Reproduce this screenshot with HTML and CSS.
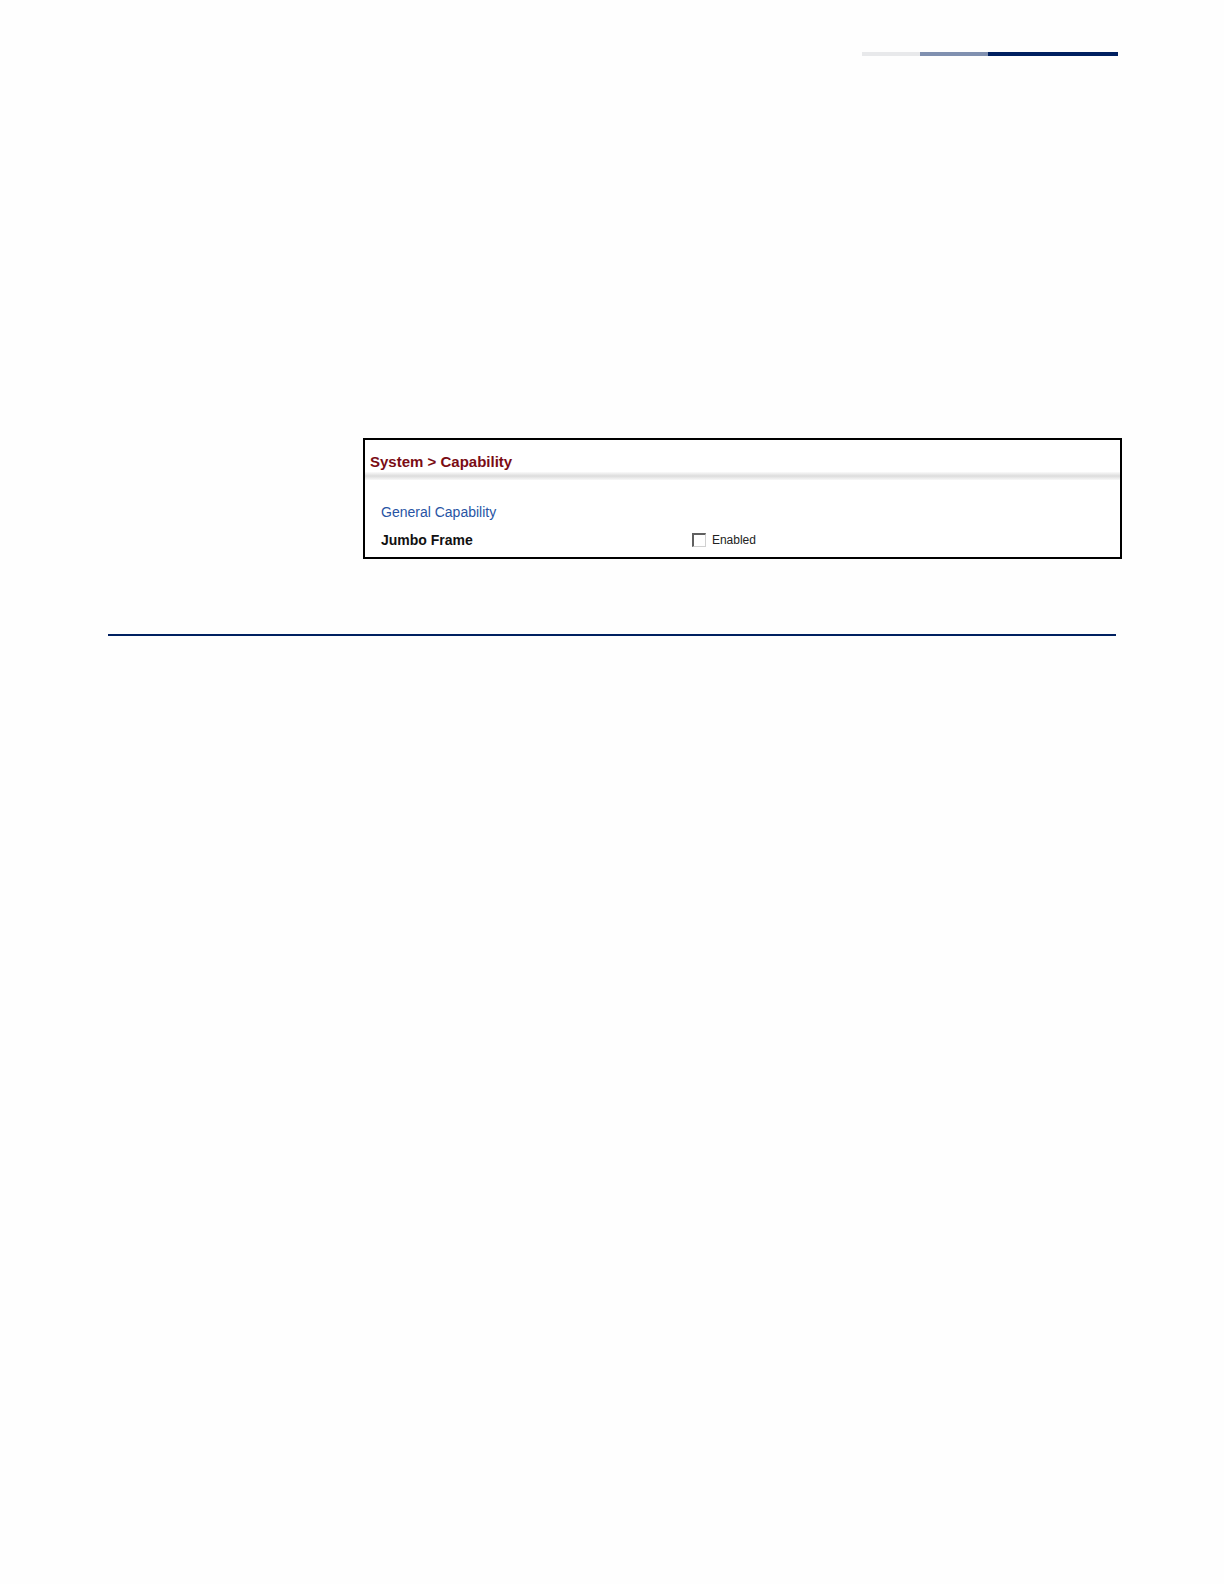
FILE: index.html
```html
<!DOCTYPE html>
<html lang="en">
<head>
    <meta charset="utf-8">
    <title>System &gt; Capability</title>
    <link rel="stylesheet" href="styles.css">
</head>
<body>
    <div class="page">
        <div class="header-bar">
            <span class="bar-light"></span>
            <span class="bar-mid"></span>
            <span class="bar-dark"></span>
        </div>

        <form class="panel">
            <h1>System &gt; Capability</h1>
            <div class="divider"></div>
            <div class="panel-body">
                <h2>General Capability</h2>
                <div class="row">
                    <span class="row-name" id="jumbo-name">Jumbo Frame</span>
                    <div class="row-value">
                        <input type="checkbox" id="jumbo" aria-describedby="jumbo-name">
                        <label for="jumbo">Enabled</label>
                    </div>
                </div>
            </div>
        </form>

        <hr class="section-line">
    </div>
</body>
</html>
```

FILE: styles.css
```css
body {
    font-family: "Liberation Sans", Arial, sans-serif;
    background-color: #fefefe;
    margin: 0;
}

.page {
    padding: 52px 102px 52px 108px;
}

.header-bar {
    display: flex;
    justify-content: flex-end;
    height: 4px;
    margin-right: 4px;
}

.bar-light {
    width: 58px;
    background-color: #e8e9eb;
}

.bar-mid {
    width: 68px;
    background-color: #8090b0;
}

.bar-dark {
    width: 130px;
    background-color: #002060;
}

.panel {
    margin: 382px 0 0 255px;
    border: 2px solid #000000;
    background-color: #ffffff;
}

h1 {
    margin: 0;
    padding: 12px 5px 0;
    font-size: 15px;
    line-height: 20px;
    color: #7a0c14;
}

.divider {
    height: 8px;
    background: linear-gradient(#fafafa, #dcdcdc 50%, #f8f8f8);
}

.panel-body {
    padding: 22px 16px 8px;
}

h2 {
    margin: 0;
    font-size: 14px;
    font-weight: normal;
    line-height: 20px;
    color: #2854a4;
}

.row {
    display: flex;
    align-items: center;
    margin-top: 9px;
    line-height: 18px;
}

.row-name {
    width: 43%;
    font-size: 14px;
    font-weight: bold;
    color: #111111;
}

.row-value {
    display: flex;
    align-items: center;
    gap: 6px;
    font-size: 12px;
    color: #222222;
}

input[type="checkbox"] {
    appearance: none;
    width: 14px;
    height: 14px;
    margin: 0;
    border: 1px solid #d0d0d0;
    border-top: 2px solid #606060;
    border-left: 2px solid #606060;
    background-color: #ffffff;
}

input[type="checkbox"]:checked {
    background-color: #606060;
}

.section-line {
    height: 2px;
    margin: 75px 6px 0 0;
    border: 0;
    background-color: #002060;
}
```
